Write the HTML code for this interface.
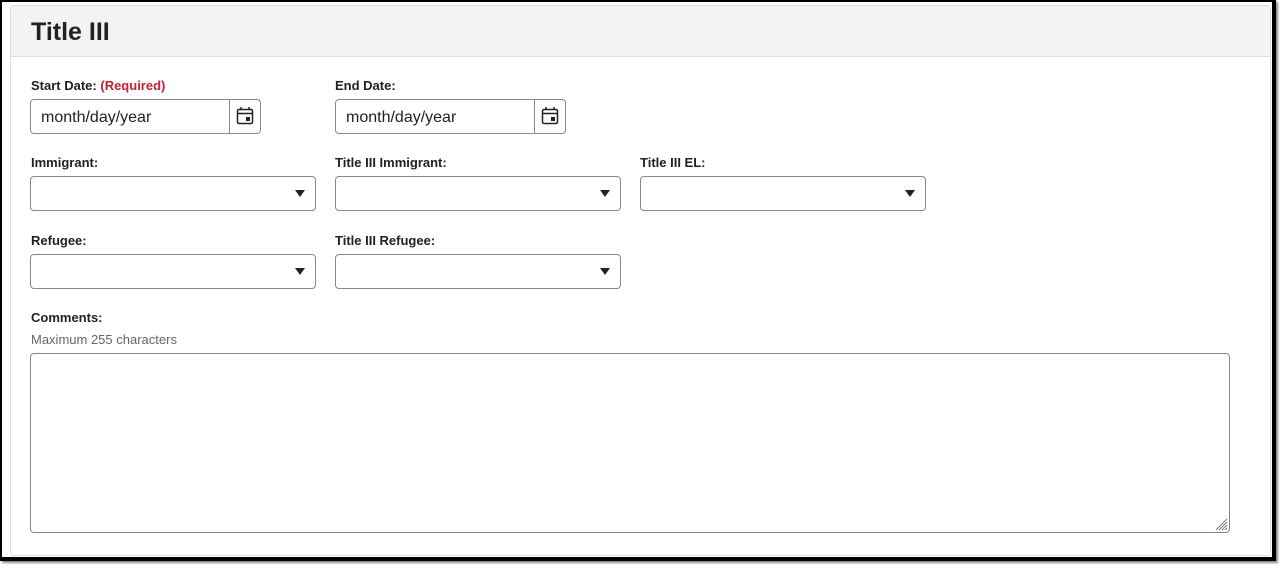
<!DOCTYPE html>
<html><head><style>
*{box-sizing:border-box}
body{margin:0;width:1282px;height:568px;background:#fff;font-family:"Liberation Sans",Arial,sans-serif;position:relative;overflow:hidden}
.frame{position:absolute;left:0;top:0;width:1276px;height:561px;border-left:2px solid #000;border-top:2px solid #000;border-right:4px solid #000;border-bottom:4px solid #000;box-shadow:2px 2px 2px #888}
.panel{position:absolute;left:10px;top:5px;width:1261px;height:551px;border:1px solid #ddd;border-radius:4px;background:#fff}
.hdr{height:51px;background:#f3f3f3;border-bottom:1px solid #ddd;border-radius:4px 4px 0 0}
h1{margin:0;position:absolute;left:31px;top:17px;font-size:25px;line-height:30px;font-weight:bold;color:#222;white-space:nowrap}
.lbl{position:absolute;font-size:13px;font-weight:bold;color:#222;white-space:nowrap}
.req{color:#c8202f}
.box{position:absolute;height:35px;border:1px solid #888;border-radius:4px;background:#fff}
.date{width:231px}
.date span{position:absolute;left:10px;top:9px;font-size:16px;color:#222}
.date .cal{position:absolute;right:0;top:0;width:31px;height:33px;border-left:1px solid #888}
.sel{width:286px}
.sel:after{content:"";position:absolute;right:10px;top:13px;border-left:5px solid transparent;border-right:5px solid transparent;border-top:7px solid #222}
.hint{position:absolute;left:31px;top:332px;font-size:13px;color:#666}
.ta{position:absolute;left:30px;top:353px;width:1200px;height:180px;border:1px solid #888;border-radius:4px}
</style></head><body>
<div class="frame"></div>
<div class="panel"><div class="hdr"></div></div>
<h1>Title III</h1>
<div class="lbl" style="left:31px;top:78px">Start Date: <span class="req">(Required)</span></div>
<div class="lbl" style="left:335px;top:78px">End Date:</div>
<div class="box date" style="left:30px;top:99px"><span>month/day/year</span><div class="cal"><svg width="31" height="33"><rect x="7.5" y="9.5" width="15" height="14" rx="1.5" fill="none" stroke="#222" stroke-width="1.5"/><line x1="7" y1="13.5" x2="23" y2="13.5" stroke="#222" stroke-width="1.5"/><line x1="11" y1="7" x2="11" y2="10" stroke="#222" stroke-width="1.5"/><line x1="19" y1="7" x2="19" y2="10" stroke="#222" stroke-width="1.5"/><rect x="16" y="17" width="4" height="4" fill="#222"/></svg></div></div>
<div class="box date" style="left:335px;top:99px"><span>month/day/year</span><div class="cal"><svg width="31" height="33"><rect x="7.5" y="9.5" width="15" height="14" rx="1.5" fill="none" stroke="#222" stroke-width="1.5"/><line x1="7" y1="13.5" x2="23" y2="13.5" stroke="#222" stroke-width="1.5"/><line x1="11" y1="7" x2="11" y2="10" stroke="#222" stroke-width="1.5"/><line x1="19" y1="7" x2="19" y2="10" stroke="#222" stroke-width="1.5"/><rect x="16" y="17" width="4" height="4" fill="#222"/></svg></div></div>
<div class="lbl" style="left:31px;top:155px">Immigrant:</div>
<div class="lbl" style="left:335px;top:155px">Title III Immigrant:</div>
<div class="lbl" style="left:640px;top:155px">Title III EL:</div>
<div class="box sel" style="left:30px;top:176px"></div>
<div class="box sel" style="left:335px;top:176px"></div>
<div class="box sel" style="left:640px;top:176px"></div>
<div class="lbl" style="left:31px;top:233px">Refugee:</div>
<div class="lbl" style="left:335px;top:233px">Title III Refugee:</div>
<div class="box sel" style="left:30px;top:254px"></div>
<div class="box sel" style="left:335px;top:254px"></div>
<div class="lbl" style="left:31px;top:310px">Comments:</div>
<div class="hint">Maximum 255 characters</div>
<div class="ta"><svg style="position:absolute;right:1px;bottom:1px" width="14" height="14"><g stroke="#777" stroke-width="1"><line x1="2" y1="13" x2="13" y2="2"/><line x1="5" y1="13" x2="13" y2="5"/><line x1="8" y1="13" x2="13" y2="8"/><line x1="11" y1="13" x2="13" y2="11"/></g></svg></div>
</body></html>
